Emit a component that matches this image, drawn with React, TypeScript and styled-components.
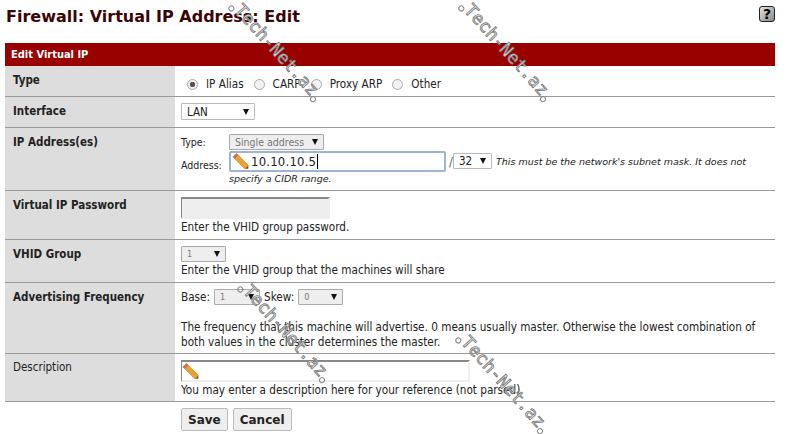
import React from "react";
import styled, {createGlobalStyle} from "styled-components";

const GlobalStyle = createGlobalStyle`
  html, body {
    margin: 0;
    padding: 0;
    background: #fff;
  }
  body {
    width: 787px;
    height: 434px;
    overflow: hidden;
    font-family: "DejaVu Sans Condensed", "DejaVu Sans", sans-serif;
    font-size: 11.65px;
    color: #222;
  }
`

const Page = styled.div`
  position: relative;
  width: 787px;
  height: 434px;
  padding: 0 12px 0 5px;
  box-sizing: border-box;
  overflow: hidden;
`

const TitleBar = styled.div`
  height: 43px;
  display: flex;
  justify-content: space-between;
  align-items: flex-start;
`

const Title = styled.h1`
  margin: 6px 0 0 1px;
  font-family: "DejaVu Sans", sans-serif;
  font-size: 16px;
  line-height: 22px;
  font-weight: bold;
  color: #3a0505;
`

const HelpIcon = styled.div`
  width: 16px;
  height: 16px;
  margin-top: 6px;
  box-sizing: border-box;
  border: 1px solid #222;
  border-radius: 3px;
  background: linear-gradient(135deg, #e4e4e4, #888);
  color: #000;
  font: bold 14px/14px "DejaVu Sans", sans-serif;
  text-align: center;
`

const Header = styled.div`
  height: 23px;
  padding-left: 6px;
  background: #990000;
  color: #fff;
  font-size: 11px;
  font-weight: bold;
  line-height: 24px;
`

const Row = styled.div<{$h: number}>`
  display: flex;
  height: ${p => p.$h}px;
  box-sizing: border-box;
  border-bottom: 1px solid #999;
`

const Label = styled.div<{$plain?: boolean}>`
  flex: 0 0 162px;
  padding: ${p => (p.$plain ? 5 : 6)}px 0 0 8px;
  background: #ddd;
  font-size: 11.5px;
  line-height: 17px;
  font-weight: ${p => (p.$plain ? "normal" : "bold")};
  color: #222;
`

const Cell = styled.div`
  flex: 1;
  padding: 6px 0 0 6px;
  min-width: 0;
`

const RadioGroup = styled.div`
  display: flex;
  align-items: center;
  padding: 2px 0 0 6px;
  height: 20px;
`

const RadioDot = styled.input.attrs({type: "radio", readOnly: true})`
  appearance: none;
  flex: none;
  width: 11px;
  height: 11px;
  margin: 0 8px 0 0;
  box-sizing: border-box;
  border: 1px solid #aaa;
  border-radius: 50%;
  background: #f2f2f2;
  &:checked {
    background: radial-gradient(circle, #555 0 2.5px, #f2f2f2 3px);
  }
`

const RadioText = styled.span`
  margin-right: 10px;
  line-height: 16px;
`

const Select = styled.div<{$w: number; $h?: number; $muted?: boolean; $small?: boolean}>`
  display: inline-flex;
  justify-content: space-between;
  align-items: center;
  flex: none;
  width: ${p => p.$w}px;
  height: ${p => p.$h ?? 16}px;
  padding: 0 5px;
  box-sizing: border-box;
  border: 1px solid ${p => (p.$muted ? "#aaa" : "#bbb")};
  border-radius: 1px;
  background: ${p => (p.$muted ? "#eee" : "#fff")};
  color: ${p => (p.$muted ? "#777" : "#222")};
  font-size: ${p => (p.$small ? 9 : p.$muted ? 10.5 : 11.5)}px;
  &::after {
    content: "";
    border-style: solid;
    border-width: 6px 3.5px 0;
    border-color: #111 transparent transparent;
  }
`

const AddressGrid = styled.div`
  display: grid;
  grid-template-columns: 48px 1fr;
  font-size: 10.5px;
`

const GridLabel = styled.div<{$top: number}>`
  padding-top: ${p => p.$top}px;
  line-height: 14px;
`

const InputLine = styled.div`
  display: flex;
  align-items: center;
`

const FocusedInput = styled.div`
  display: flex;
  align-items: center;
  flex: none;
  width: 217px;
  height: 21px;
  padding-left: 1px;
  box-sizing: border-box;
  border: 2px solid #9db4d8;
  border-radius: 2px;
  background: #fff;
  font-size: 13px;
  letter-spacing: 0.2px;
`

const Caret = styled.span`
  width: 1px;
  height: 15px;
  margin-left: 1px;
  background: #000;
`

const Slash = styled.span`
  flex: 0 0 7px;
  padding-left: 3px;
  box-sizing: border-box;
  font-size: 13px;
  color: #666;
`

const Hint = styled.span`
  margin-left: 4px;
  font-family: "DejaVu Sans", sans-serif;
  font-size: 9.5px;
  font-style: italic;
  white-space: nowrap;
`

const HintLine = styled.div`
  font-family: "DejaVu Sans", sans-serif;
  font-size: 9.5px;
  font-style: italic;
  line-height: 14px;
`

const PlainInput = styled.div<{$w: number; $fill?: string}>`
  display: flex;
  align-items: flex-start;
  width: ${p => p.$w}px;
  height: 22px;
  box-sizing: border-box;
  border-style: solid;
  border-width: 2px 2px 2px 1px;
  border-color: #888 #eee #eee #888;
  background: ${p => p.$fill ?? "#fff"};
`

const HelpText = styled.div<{$top?: number}>`
  margin-top: ${p => p.$top ?? 0}px;
  line-height: 14.5px;
  white-space: nowrap;
`

const FreqLine = styled.div`
  display: flex;
  align-items: center;
  gap: 4px;
`

const Buttons = styled.div`
  display: flex;
  gap: 5px;
  padding: 6px 0 0 176px;
`

const Button = styled.button`
  height: 23px;
  padding: 0 6px;
  border: 1px solid #bbb;
  border-radius: 2px;
  background: #eee;
  color: #222;
  font-family: "DejaVu Sans", sans-serif;
  font-size: 12px;
  font-weight: bold;
`

const Mark = styled.div<{$x: number; $y: number}>`
  position: absolute;
  left: ${p => p.$x}px;
  top: ${p => p.$y}px;
  transform: rotate(48deg);
  transform-origin: 0 0;
  font-family: "DejaVu Sans Mono", monospace;
  font-size: 17.5px;
  line-height: 14px;
  white-space: nowrap;
  color: #e8e8e8;
  -webkit-text-stroke: 0.8px #777;
  pointer-events: none;
  &::before, &::after {
    content: "";
    position: absolute;
    top: 10px;
    width: 4px;
    height: 4px;
    border: 1px solid #888;
    border-radius: 50%;
  }
  &::before {
    left: -6px;
  }
  &::after {
    right: -6px;
  }
`

const PencilSvg = styled.svg`
  flex: none;
  margin-right: 2px;
`

const Pencil = () => (
    <PencilSvg width="17" height="18" viewBox="0 0 19 19">
        <path d="M1 5 L5 1 L18 14 L18 18 L14 18 Z" fill="#f0a030" stroke="#b8741a" strokeWidth="0.6" />
        <path d="M1 5 L5 1 L7 3 L3 7 Z" fill="#d06a50" />
        <path d="M15 18 L18 15 L18 18 Z" fill="#555" />
    </PencilSvg>
)

const Watermark = ({x, y}: {x: number; y: number}) => <Mark $x={x} $y={y}>Tech-Net.az</Mark>

export default function App() {
    return <Page>
        <GlobalStyle />
        <TitleBar>
            <Title>Firewall: Virtual IP Address: Edit</Title>
            <HelpIcon>?</HelpIcon>
        </TitleBar>
        <Header>Edit Virtual IP</Header>

        <Row $h={31}>
            <Label>Type</Label>
            <Cell>
                <RadioGroup>
                    <RadioDot defaultChecked name="t" /><RadioText>IP Alias</RadioText>
                    <RadioDot name="t" /><RadioText>CARP</RadioText>
                    <RadioDot name="t" /><RadioText>Proxy ARP</RadioText>
                    <RadioDot name="t" /><RadioText>Other</RadioText>
                </RadioGroup>
            </Cell>
        </Row>

        <Row $h={31}>
            <Label>Interface</Label>
            <Cell>
                <Select $w={74} $h={17}>LAN</Select>
            </Cell>
        </Row>

        <Row $h={63}>
            <Label>IP Address(es)</Label>
            <Cell>
                <AddressGrid>
                    <GridLabel $top={1}>Type:</GridLabel>
                    <div><Select $w={95} $muted>Single address</Select></div>
                    <GridLabel $top={8}>Address:</GridLabel>
                    <InputLine>
                        <FocusedInput><Pencil /><span>10.10.10.5</span><Caret /></FocusedInput>
                        <Slash>/</Slash>
                        <Select $w={39}>32</Select>
                        <Hint>This must be the network's subnet mask. It does not</Hint>
                    </InputLine>
                    <span />
                    <HintLine>specify a CIDR range.</HintLine>
                </AddressGrid>
            </Cell>
        </Row>

        <Row $h={49}>
            <Label>Virtual IP Password</Label>
            <Cell>
                <PlainInput $w={149} $fill="#eee" />
                <HelpText $top={1}>Enter the VHID group password.</HelpText>
            </Cell>
        </Row>

        <Row $h={43}>
            <Label>VHID Group</Label>
            <Cell>
                <Select $w={45} $muted $small>1</Select>
                <HelpText $top={1}>Enter the VHID group that the machines will share</HelpText>
            </Cell>
        </Row>

        <Row $h={71}>
            <Label>Advertising Frequency</Label>
            <Cell>
                <FreqLine>
                    Base: <Select $w={46} $muted $small>1</Select>
                    Skew: <Select $w={45} $muted $small>0</Select>
                </FreqLine>
                <HelpText $top={15}>
                    The frequency that this machine will advertise. 0 means usually master. Otherwise the lowest combination of<br />
                    both values in the cluster determines the master.
                </HelpText>
            </Cell>
        </Row>

        <Row $h={48}>
            <Label $plain>Description</Label>
            <Cell>
                <PlainInput $w={289}><Pencil /></PlainInput>
                <HelpText $top={1}>You may enter a description here for your reference (not parsed).</HelpText>
            </Cell>
        </Row>

        <Buttons>
            <Button>Save</Button>
            <Button>Cancel</Button>
        </Buttons>

        <Watermark x={243} y={2} />
        <Watermark x={473} y={2} />
        <Watermark x={252} y={283} />
        <Watermark x={470} y={334} />
    </Page>
}
